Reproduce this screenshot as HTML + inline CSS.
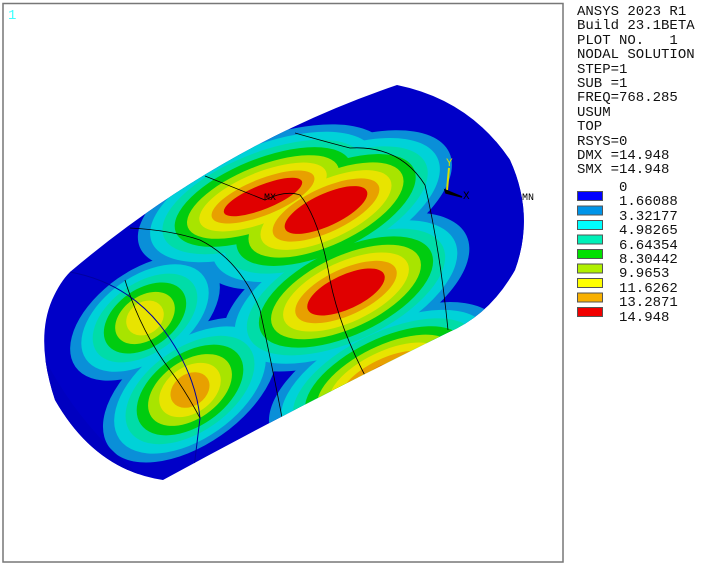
<!DOCTYPE html>
<html><head><meta charset="utf-8"><style>
html,body{margin:0;padding:0;background:#fff;}
body{width:715px;height:567px;overflow:hidden;position:relative;}
.leg{position:absolute;left:577px;top:5px;font-family:"Liberation Mono",monospace;font-size:14px;line-height:14.4px;color:#111;white-space:pre;}
</style></head><body>
<svg width="715" height="567" style="position:absolute;left:0;top:0">
<defs>
<clipPath id="cyl">
<path d="M70,272 Q220,145 397,85 Q470,100 510,160 Q535,215 515,270 Q490,315 447,333 Q300,405 163,480 Q95,470 55,400 Q35,340 52,300 Q60,282 70,272 Z"/>
</clipPath>
</defs>
<rect x="3" y="3.5" width="560" height="558.5" fill="none" stroke="#777" stroke-width="1.5"/>
<text x="8" y="19" font-family="Liberation Mono,monospace" font-size="14" fill="#40ffff">1</text>
<g clip-path="url(#cyl)">
<rect x="0" y="0" width="600" height="567" fill="#0000c8"/>
<g fill="#0a8fd8">
<ellipse cx="263" cy="197" rx="133" ry="57" transform="rotate(-22 263 197)"/>
<ellipse cx="326" cy="210" rx="136" ry="61" transform="rotate(-25 326 210)"/>
<ellipse cx="346" cy="292" rx="133" ry="62" transform="rotate(-25 346 292)"/>
<ellipse cx="385" cy="378" rx="126" ry="58" transform="rotate(-26 385 378)"/>
<ellipse cx="190" cy="390" rx="99" ry="55" transform="rotate(-35 190 390)"/>
<ellipse cx="145" cy="318" rx="85" ry="48" transform="rotate(-35 145 318)"/>
</g>
<g fill="#00d2d8">
<ellipse cx="263" cy="197" rx="120" ry="51" transform="rotate(-22 263 197)"/>
<ellipse cx="326" cy="210" rx="123" ry="55" transform="rotate(-25 326 210)"/>
<ellipse cx="346" cy="292" rx="120" ry="56" transform="rotate(-25 346 292)"/>
<ellipse cx="385" cy="378" rx="113" ry="52" transform="rotate(-26 385 378)"/>
<ellipse cx="190" cy="390" rx="86" ry="49" transform="rotate(-35 190 390)"/>
<ellipse cx="145" cy="318" rx="72" ry="42" transform="rotate(-35 145 318)"/>
</g>
<g fill="#00dca8">
<ellipse cx="263" cy="197" rx="107" ry="44" transform="rotate(-22 263 197)"/>
<ellipse cx="326" cy="210" rx="110" ry="48" transform="rotate(-25 326 210)"/>
<ellipse cx="346" cy="292" rx="107" ry="49" transform="rotate(-25 346 292)"/>
<ellipse cx="385" cy="378" rx="100" ry="45" transform="rotate(-26 385 378)"/>
<ellipse cx="190" cy="390" rx="73" ry="42" transform="rotate(-35 190 390)"/>
<ellipse cx="145" cy="318" rx="59" ry="35" transform="rotate(-35 145 318)"/>
</g>
<g fill="#00cc10">
<ellipse cx="263" cy="197" rx="94" ry="38" transform="rotate(-22 263 197)"/>
<ellipse cx="326" cy="210" rx="97" ry="42" transform="rotate(-25 326 210)"/>
<ellipse cx="346" cy="292" rx="94" ry="43" transform="rotate(-25 346 292)"/>
<ellipse cx="385" cy="378" rx="87" ry="39" transform="rotate(-26 385 378)"/>
<ellipse cx="190" cy="390" rx="60" ry="36" transform="rotate(-35 190 390)"/>
<ellipse cx="145" cy="318" rx="46" ry="29" transform="rotate(-35 145 318)"/>
</g>
<g fill="#a8e400">
<ellipse cx="263" cy="197" rx="81" ry="31" transform="rotate(-22 263 197)"/>
<ellipse cx="326" cy="210" rx="84" ry="35" transform="rotate(-25 326 210)"/>
<ellipse cx="346" cy="292" rx="81" ry="36" transform="rotate(-25 346 292)"/>
<ellipse cx="385" cy="378" rx="74" ry="32" transform="rotate(-26 385 378)"/>
<ellipse cx="190" cy="390" rx="47" ry="29" transform="rotate(-35 190 390)"/>
<ellipse cx="145" cy="318" rx="33" ry="22" transform="rotate(-35 145 318)"/>
</g>
<g fill="#e8e400">
<ellipse cx="263" cy="197" rx="68" ry="25" transform="rotate(-22 263 197)"/>
<ellipse cx="326" cy="210" rx="71" ry="29" transform="rotate(-25 326 210)"/>
<ellipse cx="346" cy="292" rx="68" ry="30" transform="rotate(-25 346 292)"/>
<ellipse cx="385" cy="378" rx="61" ry="26" transform="rotate(-26 385 378)"/>
<ellipse cx="190" cy="390" rx="34" ry="23" transform="rotate(-35 190 390)"/>
<ellipse cx="145" cy="318" rx="20" ry="16" transform="rotate(-35 145 318)"/>
</g>
<g fill="#e8a000">
<ellipse cx="263" cy="197" rx="55" ry="18" transform="rotate(-22 263 197)"/>
<ellipse cx="326" cy="210" rx="58" ry="22" transform="rotate(-25 326 210)"/>
<ellipse cx="346" cy="292" rx="55" ry="23" transform="rotate(-25 346 292)"/>
<ellipse cx="385" cy="378" rx="48" ry="19" transform="rotate(-26 385 378)"/>
<ellipse cx="190" cy="390" rx="21" ry="16" transform="rotate(-35 190 390)"/>
</g>
<g fill="#e00000">
<ellipse cx="263" cy="197" rx="42" ry="12" transform="rotate(-22 263 197)"/>
<ellipse cx="326" cy="210" rx="45" ry="16" transform="rotate(-25 326 210)"/>
<ellipse cx="346" cy="292" rx="42" ry="17" transform="rotate(-25 346 292)"/>
<ellipse cx="385" cy="378" rx="35" ry="13" transform="rotate(-26 385 378)"/>
</g>
<path d="M470,95 Q540,200 505,300 L560,300 L560,60 Z" fill="#0000c8"/>
<path d="M20,300 Q60,420 160,490 L0,560 Z" fill="#0000c0"/>
<path d="M70,272 Q125,282 160,325 Q195,370 200,418 L194,468" fill="none" stroke="#0000a0" stroke-width="1"/>
<path d="M125,280 Q140,330 170,370 Q185,390 200,418" fill="none" stroke="#000" stroke-width=".8"/>
<path d="M130,228 Q170,230 200,240 Q240,260 260,310 Q275,380 283,423" fill="none" stroke="#000" stroke-width=".8"/>
<path d="M205,176 Q240,190 265,200 Q285,190 300,195 Q320,220 330,280 Q340,330 370,385" fill="none" stroke="#000" stroke-width=".8"/>
<path d="M295,133 Q330,143 350,148 Q400,145 425,185 Q440,250 448,330" fill="none" stroke="#000" stroke-width=".8"/>
</g>
<line x1="447" y1="190" x2="449" y2="168" stroke="#d8e000" stroke-width="2"/>
<path d="M445,190 L462,197 L446,193 Z" fill="#000" stroke="#000" stroke-width="1.5"/>
<text x="446" y="166" font-family="Liberation Mono,monospace" font-size="11" fill="#d8e000">Y</text>
<text x="463" y="199" font-family="Liberation Mono,monospace" font-size="11" fill="#000">X</text>
<text x="264" y="200" font-family="Liberation Mono,monospace" font-size="10" fill="#000">MX</text>
<text x="522" y="200" font-family="Liberation Mono,monospace" font-size="10" fill="#000">MN</text>
<g stroke="#555" stroke-width="1">
<rect x="577.5" y="191.5" width="25" height="9" fill="#0000ff"/>
<rect x="577.5" y="206" width="25" height="9" fill="#0094e8"/>
<rect x="577.5" y="220.5" width="25" height="9" fill="#00ffff"/>
<rect x="577.5" y="235" width="25" height="9" fill="#00f0b8"/>
<rect x="577.5" y="249.5" width="25" height="9" fill="#00e000"/>
<rect x="577.5" y="264" width="25" height="9" fill="#b0f000"/>
<rect x="577.5" y="278.5" width="25" height="9" fill="#ffff00"/>
<rect x="577.5" y="293" width="25" height="9" fill="#f8b000"/>
<rect x="577.5" y="307.5" width="25" height="9" fill="#f00000"/>
</g>
</svg>
<div class="leg">ANSYS 2023 R1
Build 23.1BETA
PLOT NO.   1
NODAL SOLUTION
STEP=1
SUB =1
FREQ=768.285
USUM
TOP
RSYS=0
DMX =14.948
SMX =14.948</div>
<div class="leg" style="left:619px;top:181px">0
1.66088
3.32177
4.98265
6.64354
8.30442
9.9653
11.6262
13.2871
14.948</div>
</body></html>
